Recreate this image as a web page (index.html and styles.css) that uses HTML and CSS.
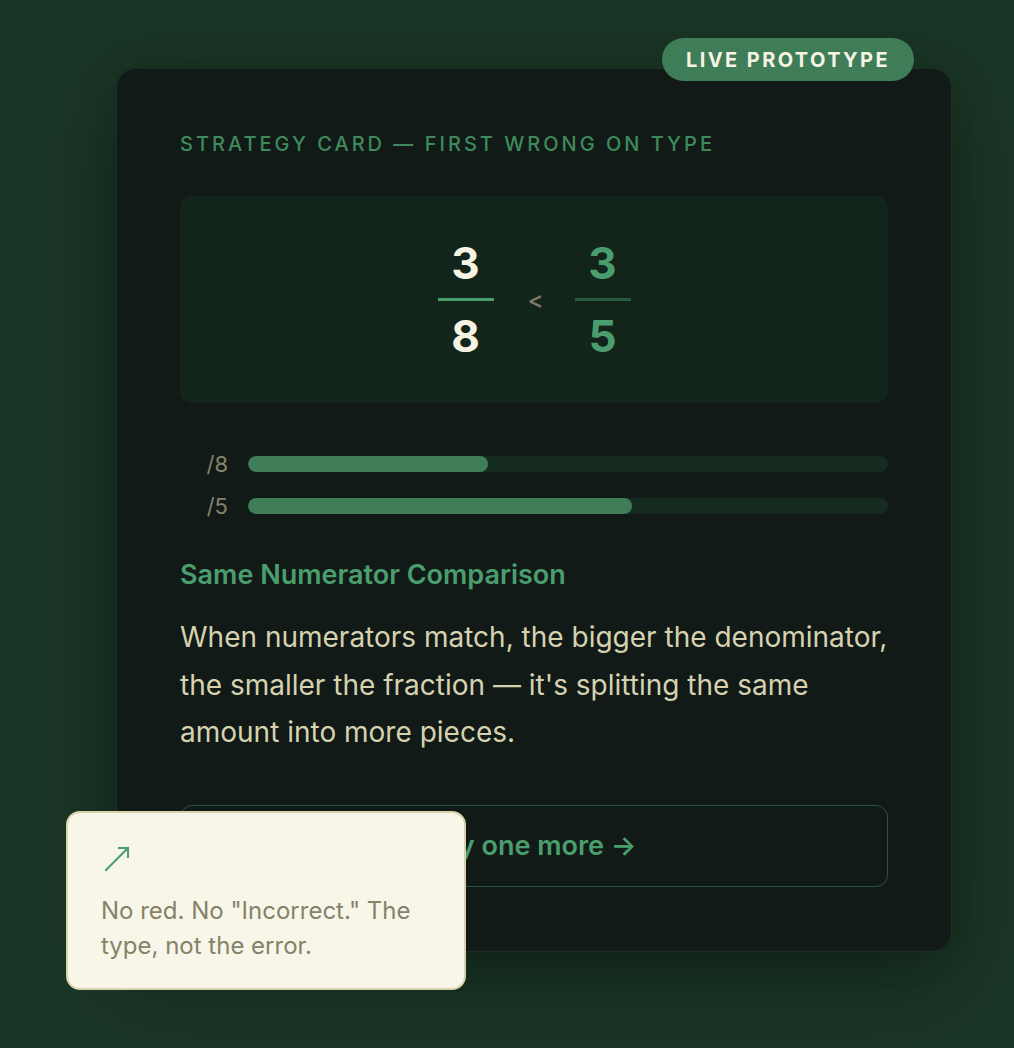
FILE: index.html
```html
<!DOCTYPE html>
<html lang="en">
<head>
<meta charset="utf-8">
<title>Strategy Card</title>
<link rel="stylesheet" href="styles.css">
</head>
<body>
<main class="stage">
  <section class="card">
    <div class="badge">LIVE PROTOTYPE</div>
    <div class="eyebrow">STRATEGY CARD — FIRST WRONG ON TYPE</div>
    <div class="compare">
      <div class="frac">
        <span class="num">3</span>
        <span class="bar-line"></span>
        <span class="num">8</span>
      </div>
      <span class="lt">&lt;</span>
      <div class="frac frac-green">
        <span class="num">3</span>
        <span class="bar-line"></span>
        <span class="num">5</span>
      </div>
    </div>
    <div class="bars">
      <div class="bar-row">
        <span class="bar-label">/8</span>
        <div class="track"><div class="fill" style="width:37.5%"></div></div>
      </div>
      <div class="bar-row">
        <span class="bar-label">/5</span>
        <div class="track"><div class="fill" style="width:60%"></div></div>
      </div>
    </div>
    <h2 class="title">Same Numerator Comparison</h2>
    <p class="body">When numerators match, the bigger the denominator, the smaller the fraction — it's splitting the same amount into more pieces.</p>
    <button class="cta">Try one more →</button>
    <aside class="note">
      <svg class="note-icon" width="30" height="30" viewBox="0 0 30 30" fill="none" stroke="#4a9e6e" stroke-width="2" stroke-linecap="square">
        <path d="M4 26 L26 4"/>
        <path d="M17 4 H26 V13"/>
      </svg>
      <p class="note-text">No red. No "Incorrect." The type, not the error.</p>
    </aside>
  </section>
</main>
</body>
</html>
```
FILE: styles.css
```css
* { box-sizing: border-box; }
html, body { margin: 0; padding: 0; }
body {
  background: #1a3626;
  font-family: "Inter", "Noto Sans", sans-serif;
  width: 1014px;
  height: 1048px;
  overflow: hidden;
}
.stage {
  padding: 68px 0 0 116px;
}
.card {
  position: relative;
  width: 836px;
  height: 884px;
  background: #111a16;
  border: 1px solid rgba(74, 158, 110, 0.16);
  border-radius: 20px;
  padding: 63px 63px;
  box-shadow: 0 30px 90px rgba(0, 0, 0, 0.32), 0 0 40px rgba(0, 0, 0, 0.12);
  display: flex;
  flex-direction: column;
}
.badge {
  position: absolute;
  top: -31px;
  right: 37px;
  height: 43px;
  padding: 0 24px;
  border-radius: 22px;
  background: #3f7d58;
  color: #f6f3e3;
  font-size: 20px;
  font-weight: 700;
  letter-spacing: 0.12em;
  display: flex;
  align-items: center;
}
.eyebrow {
  color: #3f8a5c;
  font-size: 20px;
  line-height: 24px;
  letter-spacing: 0.15em;
  font-weight: 500;
  white-space: nowrap;
}
.compare {
  margin-top: 40px;
  height: 207px;
  background: #13241b;
  border-radius: 12px;
  display: flex;
  justify-content: center;
  align-items: center;
  gap: 34px;
}
.frac {
  display: flex;
  flex-direction: column;
  align-items: center;
  gap: 13px;
  width: 56px;
  color: #f6f3e3;
}
.frac .num {
  font-size: 44px;
  font-weight: 700;
  line-height: 44px;
}
.bar-line {
  width: 56px;
  height: 3px;
  background: #4a9e6e;
}
.frac-green { color: #4a9e6e; }
.frac-green .bar-line { background: #2a5a3d; }
.lt {
  color: #7d7a66;
  font-size: 24px;
  font-weight: 500;
  width: 13px;
  text-align: center;
}
.bars {
  margin-top: 49px;
  display: flex;
  flex-direction: column;
  gap: 18px;
}
.bar-row {
  display: flex;
  align-items: center;
  gap: 20px;
  height: 24px;
}
.bar-label {
  width: 48px;
  text-align: right;
  color: #85826c;
  font-size: 22px;
}
.track {
  flex: 1;
  height: 16px;
  border-radius: 8px;
  background: #162b1f;
  overflow: hidden;
}
.fill {
  height: 100%;
  background: #3f7d58;
  border-radius: 8px;
}
.title {
  margin: 41px 0 0;
  color: #4a9e6e;
  font-size: 27px;
  font-weight: 600;
  line-height: 32px;
}
.body {
  margin: 23px 0 0;
  color: #d6d2b0;
  font-size: 28px;
  line-height: 47.5px;
}
.cta {
  margin-top: 48px;
  height: 82px;
  width: 100%;
  flex: none;
  background: transparent;
  border: 1.5px solid #2b563c;
  border-radius: 12px;
  color: #4a9e6e;
  font-family: inherit;
  font-size: 27px;
  font-weight: 600;
}
.note {
  position: absolute;
  left: -51px;
  top: 742px;
  width: 400px;
  height: 179px;
  background: #f8f6e8;
  border: 2px solid #d7d2ac;
  border-radius: 14px;
  padding: 31px 30px 0 33px;
}
.note-icon {
  display: block;
  margin-left: 1px;
}
.note-text {
  margin: 19px 0 0;
  color: #858269;
  font-size: 24px;
  line-height: 35px;
}
```
